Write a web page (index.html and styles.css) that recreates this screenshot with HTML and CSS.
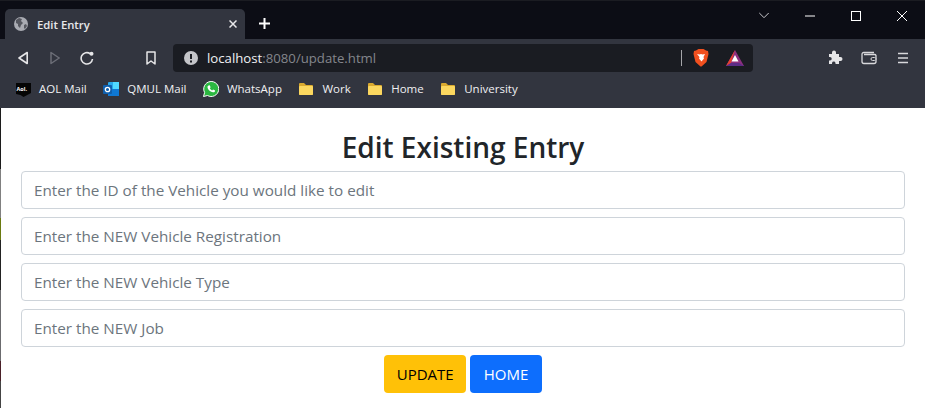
FILE: index.html
```html
<!DOCTYPE html>
<html lang="en">
<head>
    <meta charset="UTF-8">
    <meta name="viewport" content="width=device-width, initial-scale=1.0">
    <title>Edit Entry</title>
    <link rel="stylesheet" href="styles.css">
</head>
<body>
    <div class="browser">
        <div class="tab-strip">
            <div class="tab">
                <svg class="tab-globe" width="14" height="14" viewBox="0 0 14 14">
                    <circle cx="7" cy="7" r="7" fill="#a9abb2"/>
                    <path d="M2 3l3-2 3 1-1 2 2 2-2 2-1 3-2-2V7L2 6zM10 8l2-1 1 2-2 3-1-1z" fill="#55575f"/>
                </svg>
                <span class="tab-title">Edit Entry</span>
                <svg class="tab-close" width="8" height="8" viewBox="0 0 8 8">
                    <path d="M.5.5l7 7M7.500.5l-7 7" stroke="#e8e8ea" stroke-width="1.500"/>
                </svg>
            </div>
            <svg class="new-tab" width="11" height="11" viewBox="0 0 11 11">
                <path d="M5.500 0v11M0 5.500h11" stroke="#fff" stroke-width="2"/>
            </svg>
            <div class="window-controls">
                <svg width="10" height="7" viewBox="0 0 10 7"><path d="M.3 1l4.700 4.700L9.700 1" fill="none" stroke="#c8c8cc"/></svg>
                <svg width="10" height="10" viewBox="0 0 10 10"><path d="M0 5h10" stroke="#fff"/></svg>
                <svg width="10" height="10" viewBox="0 0 10 10"><rect x=".5" y=".5" width="9" height="9" fill="none" stroke="#fff"/></svg>
                <svg width="10" height="10" viewBox="0 0 10 10"><path d="M0 0l10 10M10 0L0 10" stroke="#fff"/></svg>
            </div>
        </div>

        <div class="toolbar">
            <div class="nav-buttons">
                <svg width="12" height="14" viewBox="0 0 12 14"><path d="M9.200 1.500v11L1 7z" fill="none" stroke="#e6e6e8" stroke-width="1.600" stroke-linejoin="round"/></svg>
                <svg width="10" height="14" viewBox="0 0 10 14"><path d="M1 1.500v11L9.200 7z" fill="none" stroke="#6c6e77" stroke-width="1.500" stroke-linejoin="round"/></svg>
                <svg width="14" height="14" viewBox="0 0 14 14"><path d="M12.500 8a5.700 5.700 0 1 1-2.200-5.200" fill="none" stroke="#e6e6e8" stroke-width="1.600"/><circle cx="11.500" cy="2.800" r="2" fill="#e6e6e8"/></svg>
            </div>
            <svg class="bookmark-btn" width="10" height="14" viewBox="0 0 10 14"><path d="M1 1h8v12L5 10l-4 3z" fill="none" stroke="#e6e6e8" stroke-width="1.500" stroke-linejoin="round"/></svg>
            <div class="address-bar">
                <svg width="14" height="14" viewBox="0 0 14 14"><circle cx="7" cy="7" r="7" fill="#c4c5c9"/><path d="M7 3v5M7 9.500v2" stroke="#1a1c22" stroke-width="2"/></svg>
                <span class="url"><span class="url-host">localhost</span>:8080/update.html</span>
                <span class="address-sep"></span>
                <svg width="16" height="18" viewBox="0 0 16 18"><path d="M3 1.500L5.500 0h5L13 1.500l2 .5.500 3-2 8-5 4.500h-1l-5-4.500-2-8 .5-3z" fill="#f1501f"/><path d="M4 5l2.500.5L8 5l1.500.5L12 5l-1.500 3 .5 1.500-2.500 3-2.500-3 .5-1.500z" fill="#fff"/></svg>
                <svg class="bat-icon" width="18" height="16" viewBox="0 0 18 16"><path d="M9 0l9 16H0z" fill="#8a2f7f"/><path d="M9 0L0 16l5-3z" fill="#e8402f"/><path d="M5 13l-5 3h18l-5-3z" fill="#5b2c86"/><path d="M9 5l3.500 6.500h-7z" fill="#fff"/></svg>
            </div>
            <div class="toolbar-right">
                <svg width="15" height="15" viewBox="0 0 15 15"><path d="M1 4h3V2.500a2 2 0 0 1 4 0V4h3v3h1.500a2 2 0 0 1 0 4H11v3H7.500v-1a1.800 1.800 0 0 0-3.500 0v1H1v-3.500h1a1.700 1.700 0 0 0 0-3.500H1z" fill="#e6e6e8"/></svg>
                <svg width="16" height="14" viewBox="0 0 16 14"><path d="M13 1.500H3A1.800 1.800 0 0 0 1 3.500v7A2 2 0 0 0 3 12.500h10a2 2 0 0 0 2-2v-6A1.500 1.500 0 0 0 13.500 3.500H3" fill="none" stroke="#d8d8db" stroke-width="1.300"/><rect x="10" y="6.500" width="5" height="3" rx="1.500" fill="#32353f" stroke="#d8d8db"/></svg>
                <svg class="menu-icon" width="10" height="12" viewBox="0 0 10 12"><path d="M0 1.500h10M0 6h10M0 10.500h10" stroke="#d8d8db" stroke-width="1.600"/></svg>
            </div>
        </div>

        <div class="bookmarks">
            <a class="bookmark">
                <svg width="15" height="16" viewBox="0 0 15 16"><path d="M0 2h15v10l-7.500 4-3-2-4.500-1z" fill="#050505"/><text class="aol-mark" x=".5" y="9.500">Aol.</text></svg>
                AOL Mail
            </a>
            <a class="bookmark">
                <svg width="16" height="16" viewBox="0 0 16 16"><rect x="5" y="1" width="11" height="14" rx="1" fill="#28a8ea"/><path d="M10 1h6v7h-6z" fill="#50d9ff"/><path d="M5 8h11v7H5z" fill="#0f78d4"/><rect x="0" y="4" width="9" height="9" rx="1" fill="#0f5fad"/><circle cx="4.500" cy="8.500" r="2.200" fill="none" stroke="#fff" stroke-width="1.300"/></svg>
                QMUL Mail
            </a>
            <a class="bookmark">
                <svg width="16" height="16" viewBox="0 0 16 16"><path d="M.5 15.500l1.100-4A7.500 7.500 0 1 1 4.500 14.500z" fill="#2bb741" stroke="#fff"/><path d="M5.500 4.500l1.200-.3.900 2-.8 1a5 5 0 0 0 2.300 2.200l1-.9 2 1-.3 1.200c-1 1-2.500.8-4.500-.4S4.300 7 4.500 5.500z" fill="#fff"/></svg>
                WhatsApp
            </a>
            <a class="bookmark">
                <svg width="16" height="14" viewBox="0 0 16 14"><path d="M1 2a1 1 0 0 1 1-1h4l2 2h6a1 1 0 0 1 1 1v8a1 1 0 0 1-1 1H2a1 1 0 0 1-1-1z" fill="#d9a92f"/><rect x="1" y="4" width="14" height="9" rx="1" fill="#fbd75f"/></svg>
                Work
            </a>
            <a class="bookmark">
                <svg width="16" height="14" viewBox="0 0 16 14"><path d="M1 2a1 1 0 0 1 1-1h4l2 2h6a1 1 0 0 1 1 1v8a1 1 0 0 1-1 1H2a1 1 0 0 1-1-1z" fill="#d9a92f"/><rect x="1" y="4" width="14" height="9" rx="1" fill="#fbd75f"/></svg>
                Home
            </a>
            <a class="bookmark">
                <svg width="16" height="14" viewBox="0 0 16 14"><path d="M1 2a1 1 0 0 1 1-1h4l2 2h6a1 1 0 0 1 1 1v8a1 1 0 0 1-1 1H2a1 1 0 0 1-1-1z" fill="#d9a92f"/><rect x="1" y="4" width="14" height="9" rx="1" fill="#fbd75f"/></svg>
                University
            </a>
        </div>
    </div>

    <div class="page">
        <h1 class="page-title">Edit Existing Entry</h1>
        <form class="entry-form">
            <input class="form-control" type="text" placeholder="Enter the ID of the Vehicle you would like to edit">
            <input class="form-control" type="text" placeholder="Enter the NEW Vehicle Registration">
            <input class="form-control" type="text" placeholder="Enter the NEW Vehicle Type">
            <input class="form-control" type="text" placeholder="Enter the NEW Job">
            <div class="form-buttons">
                <button class="btn btn-warning" type="button">UPDATE</button>
                <button class="btn btn-primary" type="button">HOME</button>
            </div>
        </form>
    </div>
</body>
</html>
```

FILE: styles.css
```css
* {
    box-sizing: border-box;
}

body {
    display: flex;
    flex-direction: column;
    margin: 0;
    height: 408px;
    overflow: hidden;
    font-family: "Open Sans", "Noto Sans", sans-serif;
    background-color: #fff;
}

/* browser chrome */
.browser {
    background-color: #32353f;
    color: #fff;
}

.tab-strip {
    display: flex;
    align-items: flex-end;
    height: 39px;
    padding-left: 5px;
    background-color: #0c0d15;
    border-top: 1px solid #1b1c22;
}

.tab {
    display: flex;
    align-items: center;
    width: 240px;
    height: 30px;
    padding: 0 8px 0 9px;
    background-color: #32353f;
    border-radius: 5px 5px 0 0;
}

.tab-title {
    flex: 1;
    margin-left: 9px;
    font-size: 11.3px;
    font-weight: 600;
    color: #e8e8ea;
}

.new-tab {
    margin: 0 0 10px 14px;
}

.window-controls {
    display: flex;
    align-items: center;
    gap: 36px;
    margin-left: auto;
    height: 29px;
    align-self: flex-start;
    padding-right: 18px;
}

.toolbar {
    display: flex;
    align-items: center;
    height: 33px;
    padding: 4px 0 0 18px;
}

.nav-buttons {
    display: flex;
    align-items: center;
    gap: 20px;
}

.bookmark-btn {
    margin-left: 52px;
}

.address-bar {
    display: flex;
    align-items: center;
    width: 580px;
    height: 28px;
    margin-left: 17px;
    padding: 0 9px 0 11px;
    background-color: #1a1c22;
    border-radius: 4px;
}

.url {
    flex: 1;
    margin-left: 9px;
    font-size: 13.2px;
    color: #84868c;
}

.url-host {
    color: #f0f0f2;
}

.address-sep {
    width: 1px;
    height: 16px;
    margin-right: 11px;
    background-color: #a5a6aa;
}

.bat-icon {
    margin-left: 17px;
}

.toolbar-right {
    display: flex;
    align-items: center;
    gap: 18px;
    margin-left: 75px;
}

.menu-icon {
    margin-left: 3px;
}

.bookmarks {
    display: flex;
    align-items: center;
    gap: 16.5px;
    height: 36px;
    padding: 0 0 3px 16px;
}

.bookmark {
    display: flex;
    align-items: center;
    gap: 8px;
    font-size: 11.5px;
    color: #f0f0f2;
}

.aol-mark {
    font-size: 5.500px;
    font-weight: 700;
    fill: #fff;
}

/* page, the left edge is the desktop showing past the window */
.page {
    flex: 1;
    padding: 22px 20px 0 20px;
    border-left: 1px solid;
    border-image: linear-gradient(#1c1c1c 62px, #808080 62px, #808080 110px, #6a7a10 110px, #6a7a10 132px, #222 132px, #222 182px, #6b6b6e 182px, #6b6b6e 252px, #4a2028 252px, #4a2028 272px, #444 272px) 1;
}

.page-title {
    margin: 0 0 6px;
    text-align: center;
    font-size: 28px;
    font-weight: 600;
    line-height: 35px;
    color: #212529;
}

.entry-form {
    display: flex;
    flex-direction: column;
    gap: 8px;
}

.form-control {
    display: block;
    width: 100%;
    height: 38px;
    padding: 6px 12px;
    font-family: inherit;
    font-size: 15.250px;
    color: #212529;
    background-color: #fff;
    border: 1px solid #ced4da;
    border-radius: 4px;
}

.form-control::placeholder {
    color: #6c757d;
    opacity: 1;
}

.form-buttons {
    display: flex;
    justify-content: center;
    gap: 4px;
}

.btn {
    height: 38px;
    font-family: inherit;
    font-size: 15px;
    border: 1px solid transparent;
    border-radius: 4px;
}

.btn-warning {
    padding: 6px 11.500px;
    color: #000;
    background-color: #ffc107;
}

.btn-primary {
    padding: 6px 12.500px;
    color: #fff;
    background-color: #0d6efd;
}
```
